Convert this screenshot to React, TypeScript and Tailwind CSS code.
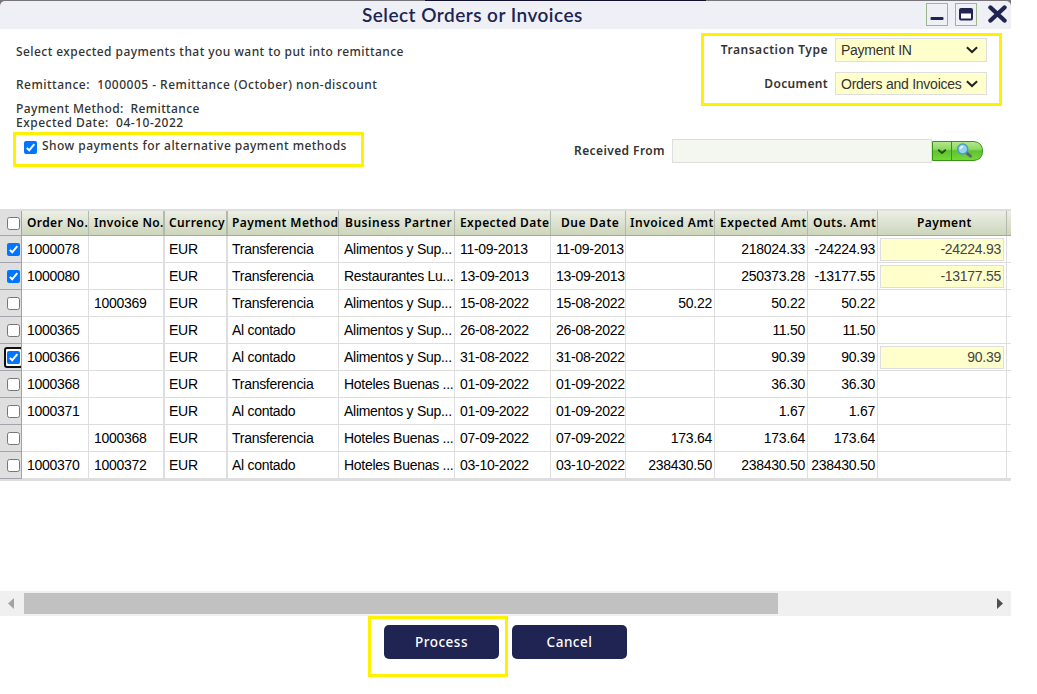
import React from "react";

type Row = {
  checked?: boolean;
  focused?: boolean;
  order?: string;
  invoice?: string;
  method: string;
  partner: string;
  expected: string;
  due: string;
  invoiced?: string;
  expectedAmt: string;
  outs: string;
  payment?: string;
};

const rows: Row[] = [
  { checked: true, order: "1000078", method: "Transferencia", partner: "Alimentos y Sup...", expected: "11-09-2013", due: "11-09-2013", expectedAmt: "218024.33", outs: "-24224.93", payment: "-24224.93" },
  { checked: true, order: "1000080", method: "Transferencia", partner: "Restaurantes Lu...", expected: "13-09-2013", due: "13-09-2013", expectedAmt: "250373.28", outs: "-13177.55", payment: "-13177.55" },
  { invoice: "1000369", method: "Transferencia", partner: "Alimentos y Sup...", expected: "15-08-2022", due: "15-08-2022", invoiced: "50.22", expectedAmt: "50.22", outs: "50.22" },
  { order: "1000365", method: "Al contado", partner: "Alimentos y Sup...", expected: "26-08-2022", due: "26-08-2022", expectedAmt: "11.50", outs: "11.50" },
  { checked: true, focused: true, order: "1000366", method: "Al contado", partner: "Alimentos y Sup...", expected: "31-08-2022", due: "31-08-2022", expectedAmt: "90.39", outs: "90.39", payment: "90.39" },
  { order: "1000368", method: "Transferencia", partner: "Hoteles Buenas ...", expected: "01-09-2022", due: "01-09-2022", expectedAmt: "36.30", outs: "36.30" },
  { order: "1000371", method: "Al contado", partner: "Alimentos y Sup...", expected: "01-09-2022", due: "01-09-2022", expectedAmt: "1.67", outs: "1.67" },
  { invoice: "1000368", method: "Transferencia", partner: "Hoteles Buenas ...", expected: "07-09-2022", due: "07-09-2022", invoiced: "173.64", expectedAmt: "173.64", outs: "173.64" },
  { order: "1000370", invoice: "1000372", method: "Al contado", partner: "Hoteles Buenas ...", expected: "03-10-2022", due: "03-10-2022", invoiced: "238430.50", expectedAmt: "238430.50", outs: "238430.50" },
];

const gridCols =
  "grid grid-cols-[22px_67px_76px_63px_111px_116px_96px_75px_89px_93px_70px_129px_4px]";

function Check({ checked }: { checked?: boolean }) {
  return checked ? (
    <svg width="13" height="13" viewBox="0 0 13 13" className="block shrink-0">
      <rect width="13" height="13" rx="2" fill="#0075ff" />
      <path d="M2.8 6.9 5.2 9.3 10.3 3.2" fill="none" stroke="#fff" strokeWidth="2" />
    </svg>
  ) : (
    <svg width="13" height="13" viewBox="0 0 13 13" className="block shrink-0">
      <rect x=".5" y=".5" width="12" height="12" rx="2" fill="#fff" stroke="#767676" />
    </svg>
  );
}

function Chevron() {
  return (
    <svg width="12" height="8" viewBox="0 0 12 8" className="block shrink-0">
      <path d="M.9 1.3 6 6.1 11.1 1.3" fill="none" stroke="#222" strokeWidth="2" />
    </svg>
  );
}

function Select({ value, height }: { value: string; height: string }) {
  return (
    <div className={`flex w-[152px] items-center justify-between border border-[#dedede] bg-[#ffffcc] pl-[5px] pr-[8px] text-[#333] ${height}`}>
      <span className="whitespace-nowrap pt-px font-['Liberation_Sans',sans-serif] text-[14px] font-normal tracking-[-0.25px]">{value}</span>
      <Chevron />
    </div>
  );
}

function Head({ className, children }: { className: string; children?: React.ReactNode }) {
  return (
    <div className={`overflow-hidden whitespace-nowrap border-r border-[#b4b9ae] leading-[23px] ${className}`}>
      {children}
    </div>
  );
}

function Cell({ className = "", children }: { className?: string; children?: React.ReactNode }) {
  return (
    <div className={`overflow-hidden whitespace-nowrap border-b border-r border-[#dedede] leading-[27px] ${className}`}>
      {children}
    </div>
  );
}

export default function App() {
  return (
    <div className="h-[694px] w-[1037px] overflow-hidden bg-white font-['Noto_Sans',sans-serif] text-[12px] font-semibold text-[#333]">
      <div className="w-[1011px]">
        <div className="bg-[#77757a]">
          <div className="flex h-px">
            <div className="w-[425px]" />
            <div className="w-[281px] bg-[#12112f]" />
          </div>
          <header className="flex h-[28px] justify-between rounded-t-[5px] bg-[#eff0f6] pl-[362px]">
            <h1 className="whitespace-nowrap font-['Lato',sans-serif] text-[19px] font-semibold leading-[27px] tracking-[0.47px] text-[#202452]">
              Select Orders or Invoices
            </h1>
            <div className="flex items-start justify-end pr-[3px] pt-[2px]">
              <svg width="22" height="23" viewBox="0 0 22 23" className="mr-[7px]">
                <rect x=".5" y=".5" width="21" height="22" fill="none" stroke="#9eb58e" />
                <rect x="4.5" y="14" width="13" height="3" rx="1" fill="#202452" />
              </svg>
              <svg width="22" height="23" viewBox="0 0 22 23" className="mr-[11px]">
                <rect x=".5" y=".5" width="21" height="22" fill="none" stroke="#9eb58e" />
                <rect x="5" y="6" width="12" height="10.5" rx="1" fill="#fff" stroke="#202452" strokeWidth="2" />
                <rect x="5" y="6" width="12" height="4.5" fill="#202452" />
              </svg>
              <svg width="20" height="19" viewBox="0 0 20 19" className="mt-[2px]">
                <path d="M2.5 2.5 16.5 15.5M16.5 2.5 2.5 15.5" fill="none" stroke="#202452" strokeWidth="4.4" strokeLinecap="round" />
              </svg>
            </div>
          </header>
        </div>

        <section className="flex h-[180px] justify-between">
          <div className="pl-[13px] pt-[15px] font-medium leading-[16px]">
            <div className="pl-[3px]">
              <p className="whitespace-nowrap tracking-[0.43px]">Select expected payments that you want to put into remittance</p>
              <p className="mt-[17px] whitespace-pre tracking-[0.48px]">{"Remittance:  1000005 - Remittance (October) non-discount"}</p>
              <div className="mt-[9px] whitespace-pre leading-[14px]">
                <p className="tracking-[0.37px]">{"Payment Method:  Remittance"}</p>
                <p className="tracking-[0.5px]">{"Expected Date:  04-10-2022"}</p>
              </div>
            </div>
            <label className="mt-[2px] flex h-[35px] w-[351px] items-start border-[3px] border-[#fff200] pl-[8px]">
              <span className="mt-[6px]"><Check checked /></span>
              <span className="ml-[5px] mt-[3px] whitespace-nowrap tracking-[0.46px]">Show payments for alternative payment methods</span>
            </label>
          </div>
          <div className="pt-[4px]">
            <div className="ml-auto mr-[9px] flex h-[73px] w-[301px] flex-col items-end border-[3px] border-[#fff200] pr-[12px] pt-[2px]">
              <div className="flex items-center">
                <span className="mr-[7px] tracking-[0.52px]">Transaction Type</span>
                <Select value="Payment IN" height="h-[24px]" />
              </div>
              <div className="mt-[10px] flex items-center">
                <span className="mr-[7px] tracking-[0.35px]">Document</span>
                <Select value="Orders and Invoices" height="h-[23px]" />
              </div>
            </div>
            <div className="mr-[28px] mt-[33px] flex items-center">
              <span className="mr-[7px] whitespace-nowrap tracking-[0.4px]">Received From</span>
              <div className="h-[24px] w-[260px] border border-[#dedede] bg-[#f4f7f0]" />
              <svg width="51" height="20" viewBox="0 0 51 20" className="block">
                <defs>
                  <linearGradient id="green" x1="0" y1="0" x2="0" y2="1">
                    <stop offset="0" stopColor="#b4e890" />
                    <stop offset=".4" stopColor="#8ed964" />
                    <stop offset=".5" stopColor="#5fc22f" />
                    <stop offset="1" stopColor="#74dc34" />
                  </linearGradient>
                </defs>
                <path d="M.5.5H42Q50.5 1.5 50.5 10T42 19.5H.5Z" fill="url(#green)" stroke="#389513" />
                <path d="M19.5 0V20" stroke="#389513" />
                <path d="m6.2 8.8 3.8 3.2 3.8-3.2" fill="none" stroke="#234d14" strokeWidth="1.8" />
                <path d="m34.8 12 3.7 3.2" stroke="#5c6675" strokeWidth="3" strokeLinecap="round" />
                <circle cx="30.7" cy="8" r="5" fill="#9ad4ea" stroke="#4b9dc8" strokeWidth="1.6" />
                <path d="M28.2 8.2Q28.5 5.8 31 5.5" fill="none" stroke="#e5f8ff" strokeWidth="1.4" />
              </svg>
            </div>
          </div>
        </section>

        <section className="border-b-2 border-t-2 border-[#dedede]">
          <div className={`${gridCols} h-[25px] border-b border-[#a3a8a5] bg-linear-to-b from-[#ebefe5] to-[#cdd5bb] text-black`}>
            <div className="flex items-center border-r border-[#a3a3b0] bg-[#dfdfdf] pl-[7px]"><Check /></div>
            <Head className="pl-[5px] tracking-[0.4px]">Order No.</Head>
            <Head className="border-r-2 pl-[5px] tracking-[0.35px]">Invoice No.</Head>
            <Head className="border-r-2 pl-[4px] tracking-[0.4px]">Currency</Head>
            <Head className="pl-[4px] tracking-[0.4px]">Payment Method</Head>
            <Head className="pl-[6px] tracking-[0.52px]">Business Partner</Head>
            <Head className="pl-[5px] tracking-[0.4px]">Expected Date</Head>
            <Head className="pl-[10px] tracking-[0.5px]">Due Date</Head>
            <Head className="pl-[4px] tracking-[0.52px]">Invoiced Amt</Head>
            <Head className="pl-[5px] tracking-[0.5px]">Expected Amt</Head>
            <Head className="pl-[5px] tracking-[0.5px]">Outs. Amt</Head>
            <Head className="pl-[39px] tracking-[0.4px]">Payment</Head>
            <div />
          </div>
          {rows.map((r, i) => (
            <div key={i} className={`${gridCols} h-[27px] font-['Liberation_Sans',sans-serif] text-[14px] font-normal tracking-[-0.28px] text-black`}>
              <div className="flex items-center overflow-hidden border-b border-r border-[#a3a3b0] bg-[#dfdfdf]">
                {r.focused ? (
                  <div className="ml-[4px] flex h-[21px] w-[19px] shrink-0 items-center rounded-[3px] border-2 border-[#101010] bg-white pl-px"><Check checked /></div>
                ) : (
                  <div className="ml-[7px]"><Check checked={r.checked} /></div>
                )}
              </div>
              <Cell className="pl-[5px]">{r.order}</Cell>
              <Cell className="border-r-2 pl-[5px]">{r.invoice}</Cell>
              <Cell className="border-r-2 pl-[4px]">EUR</Cell>
              <Cell className="pl-[4px]">{r.method}</Cell>
              <Cell className="pl-[5px]">{r.partner}</Cell>
              <Cell className="pl-[5px]">{r.expected}</Cell>
              <Cell className="pl-[5px]">{r.due}</Cell>
              <Cell className="pr-[2px] text-right">{r.invoiced}</Cell>
              <Cell className="pr-[2px] text-right">{r.expectedAmt}</Cell>
              <Cell className="pr-[2px] text-right">{r.outs}</Cell>
              <Cell className="px-[2px] pt-[2px]">
                {r.payment && (
                  <div className="h-[23px] border border-[#dedede] bg-[#ffffcc] pr-[2px] text-right leading-[21px] text-[#444]">{r.payment}</div>
                )}
              </Cell>
              <div className="border-b border-[#dedede]" />
            </div>
          ))}
        </section>

        <div className="mt-[110px] flex h-[25px] items-center bg-[#f0f0f0]">
          <svg width="24" height="25" viewBox="0 0 24 25"><path d="M14 7V18L8 12.5Z" fill="#a3a3a3" /></svg>
          <div className="h-[21px] w-[754px] bg-[#c1c1c1]" />
          <svg width="24" height="25" viewBox="0 0 24 25" className="ml-auto"><path d="M10 7V18L16 12.5Z" fill="#505050" /></svg>
        </div>

        <div className="flex pl-[368px] text-[13.5px] font-medium text-white">
          <div className="h-[61px] w-[140px] border-[3px] border-[#fff200] pl-[13px] pt-[6px]">
            <button className="h-[34px] w-[115px] rounded-[5px] bg-[#202452] tracking-[0.5px]">Process</button>
          </div>
          <button className="ml-[4px] mt-[9px] h-[34px] w-[115px] rounded-[5px] bg-[#202452] tracking-[0.5px]">Cancel</button>
        </div>
      </div>
    </div>
  );
}
